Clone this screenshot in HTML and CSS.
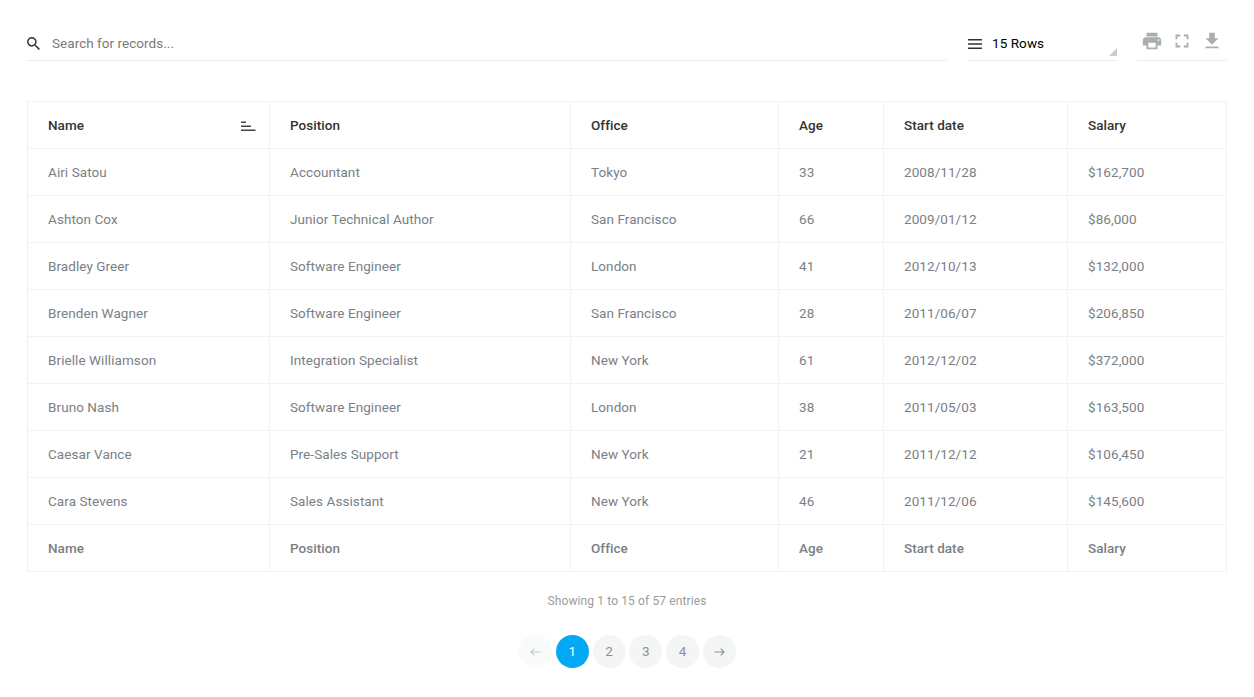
FILE: index.html
```
<!DOCTYPE html>
<html lang="en">
<head>
<meta charset="utf-8">
<title>Data table</title>
<link rel="stylesheet" href="styles.css">
</head>
<body>
<main class="page">
  <div class="toolbar">
    <label class="search">
      <svg class="search-icon" viewBox="3 3 17.5 17.5"><path d="M15.5 14h-.79l-.28-.27A6.47 6.47 0 0 0 16 9.500 6.500 6.500 0 1 0 9.500 16c1.610 0 3.090-.59 4.230-1.570l.27.28v.79l5 4.990L20.490 19l-4.990-5zm-6 0C7.010 14 5 11.990 5 9.500S7.010 5 9.500 5 14 7.010 14 9.500 11.990 14 9.500 14z"/></svg>
      <input class="search-input" type="text" placeholder="Search for records...">
    </label>
    <div class="length">
      <svg class="length-icon" viewBox="0 0 14 10"><path d="M0 0h14v1.500H0zM0 4.250h14v1.500H0zM0 8.500h14V10H0z"/></svg>
      <span>15 Rows</span>
      <i class="length-corner"></i>
    </div>
    <div class="actions">
      <svg class="action" viewBox="0 0 24 24"><path d="M19 8H5c-1.660 0-3 1.340-3 3v6h4v4h12v-4h4v-6c0-1.660-1.340-3-3-3zm-3 11H8v-5h8v5zm3-7c-.55 0-1-.45-1-1s.45-1 1-1 1 .45 1 1-.45 1-1 1zm-1-9H6v4h12V3z"/></svg>
      <svg class="action" viewBox="0 0 24 24"><path d="M7 14H5v5h5v-2H7v-3zm-2-4h2V7h3V5H5v5zm12 7h-3v2h5v-5h-2v3zM14 5v2h3v3h2V5h-5z"/></svg>
      <svg class="action" viewBox="0 0 24 24"><path d="M19 9h-4V3H9v6H5l7 7 7-7zM5 18v2h14v-2H5z"/></svg>
    </div>
  </div>

  <table class="records">
    <colgroup><col class="c-name"><col class="c-position"><col class="c-office"><col class="c-age"><col class="c-date"><col class="c-salary"></colgroup>
    <thead>
      <tr><th><div class="sorted">Name<svg class="sort-icon" viewBox="0 0 15 10"><path d="M0 .500h5v1.500H0zM0 4.500h10V6H0zM0 8.500h14.500V10H0z"/></svg></div></th><th>Position</th><th>Office</th><th>Age</th><th>Start date</th><th>Salary</th></tr>
    </thead>
    <tbody>
      <tr><td>Airi Satou</td><td>Accountant</td><td>Tokyo</td><td>33</td><td>2008/11/28</td><td>$162,700</td></tr>
      <tr><td>Ashton Cox</td><td>Junior Technical Author</td><td>San Francisco</td><td>66</td><td>2009/01/12</td><td>$86,000</td></tr>
      <tr><td>Bradley Greer</td><td>Software Engineer</td><td>London</td><td>41</td><td>2012/10/13</td><td>$132,000</td></tr>
      <tr><td>Brenden Wagner</td><td>Software Engineer</td><td>San Francisco</td><td>28</td><td>2011/06/07</td><td>$206,850</td></tr>
      <tr><td>Brielle Williamson</td><td>Integration Specialist</td><td>New York</td><td>61</td><td>2012/12/02</td><td>$372,000</td></tr>
      <tr><td>Bruno Nash</td><td>Software Engineer</td><td>London</td><td>38</td><td>2011/05/03</td><td>$163,500</td></tr>
      <tr><td>Caesar Vance</td><td>Pre-Sales Support</td><td>New York</td><td>21</td><td>2011/12/12</td><td>$106,450</td></tr>
      <tr><td>Cara Stevens</td><td>Sales Assistant</td><td>New York</td><td>46</td><td>2011/12/06</td><td>$145,600</td></tr>
    </tbody>
    <tfoot>
      <tr><th>Name</th><th>Position</th><th>Office</th><th>Age</th><th>Start date</th><th>Salary</th></tr>
    </tfoot>
  </table>

  <div class="info">Showing 1 to 15 of 57 entries</div>
  <nav class="pager">
    <a class="page-link disabled"><svg class="arrow" viewBox="0 0 11 8"><path d="M4.300.7 1 4l3.300 3.300M1 4h9.500"/></svg></a>
    <a class="page-link current">1</a>
    <a class="page-link">2</a>
    <a class="page-link">3</a>
    <a class="page-link">4</a>
    <a class="page-link"><svg class="arrow" viewBox="0 0 11 8"><path d="M6.700.7 10 4 6.700 7.300M10 4H.5"/></svg></a>
  </nav>
</main>
</body>
</html>
```
FILE: styles.css
```
* { box-sizing: border-box; }
body {
  margin: 0;
  background: #fff;
  color: #7a8086;
  font: 400 13.5px/20px Roboto, sans-serif;
  letter-spacing: 0.07px;
  overflow: hidden;
}
.page { width: 1200px; margin: 0 27px; padding-top: 26px; }
.toolbar { display: flex; gap: 20px; height: 35px; }
.search, .length, .actions { display: flex; border-bottom: 1px solid #ececec; }
.search { flex: 1; align-items: center; }
.search-icon { width: 13px; height: 13px; fill: #333; margin-top: 1px; }
.search-input {
  flex: 1;
  border: 0;
  outline: 0;
  padding: 0 0 1px;
  margin-left: 12px;
  background: transparent;
  font: inherit;
  letter-spacing: 0.04px;
}
.search-input::placeholder { color: #7a7a7a; opacity: 1; }
.length { position: relative; width: 150px; align-items: center; color: #000; }
.length-icon { width: 14px; height: 10px; margin: 1px 10px 0 1px; fill: #333; }
.length-corner {
  position: absolute;
  right: 0;
  bottom: 4px;
  border-left: 8px solid transparent;
  border-bottom: 8px solid #ccc;
}
.actions { width: 90px; justify-content: space-around; padding-top: 3.5px; }
.action { width: 22px; height: 22px; fill: #a9aeb1; }

.records {
  width: 1200px;
  margin-top: 40px;
  table-layout: fixed;
  border-spacing: 0;
  border-right: 1px solid #f2f2f2;
  border-bottom: 1px solid #f2f2f2;
}
.c-name { width: 242px; }
.c-position { width: 301px; }
.c-office { width: 208px; }
.c-age { width: 105px; }
.c-date { width: 184px; }
.c-salary { width: 159px; }
.records th, .records td {
  height: 47px;
  padding: 0 0 0 20px;
  border: solid #f2f2f2;
  border-width: 1px 0 0 1px;
  text-align: left;
  vertical-align: middle;
}
.records th { font-weight: 500; letter-spacing: 0.04px; }
.records thead th { color: #333; }
.sorted { display: flex; justify-content: space-between; align-items: center; padding-right: 13px; }
.sort-icon { width: 15px; height: 10px; fill: #444; margin-top: 2px; }

.info { margin-top: 19px; text-align: center; font-size: 12px; color: #9c9c9c; letter-spacing: 0.12px; }
.pager { display: flex; justify-content: center; gap: 3.8px; margin: 24px 0 0 1px; }
.page-link {
  display: flex;
  align-items: center;
  justify-content: center;
  width: 33px;
  height: 33px;
  padding-bottom: 1px;
  border-radius: 50%;
  background: #f4f6f6;
  color: #8e9194;
}
.current { background: #03a9f4; color: #fff; }
.disabled { opacity: 0.5; }
.arrow { width: 11px; height: 8px; margin-top: 1px; fill: none; stroke: #8e9194; stroke-width: 1.2; }
```
